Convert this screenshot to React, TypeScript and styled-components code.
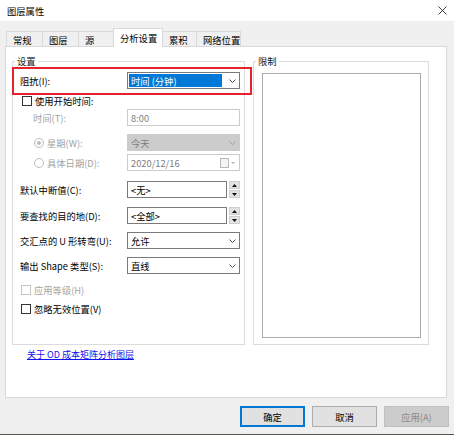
import React from "react";
import styled, { createGlobalStyle, css } from "styled-components";

const GlobalStyle = createGlobalStyle`
  html, body { margin: 0; padding: 0; background: #5a544b; }
  body {
    font-family: "Noto Sans CJK SC", "Noto Sans", sans-serif;
    font-size: 9.3px;
    color: #000;
  }
`;

const Window = styled.div`
  width: 454px;
  height: 434px;
  background: #f0f0f0;
  display: flex;
  flex-direction: column;
  overflow: hidden;
`;

const TitleBar = styled.div`
  height: 21px;
  flex-shrink: 0;
  background: #fff;
  display: flex;
  align-items: center;
  justify-content: space-between;
  padding: 0 7px;
  line-height: 12px;
`;

const Title = styled.span`
  color: #000;
`;

const TabStrip = styled.div`
  display: flex;
  align-items: flex-end;
  height: 18px;
  margin-top: 7px;
  padding-left: 6px;
  position: relative;
  z-index: 1;
`;

const Tab = styled.div<{ $w: number; $active?: boolean }>`
  box-sizing: border-box;
  width: ${(p) => p.$w}px;
  height: ${(p) => (p.$active ? 19 : 15)}px;
  margin-bottom: ${(p) => (p.$active ? -1 : 0)}px;
  margin-left: -1px;
  &:first-child { margin-left: 0; }
  border: 1px solid #d9d9d9;
  border-bottom: none;
  background: ${(p) => (p.$active ? "#fff" : "#f0f0f0")};
  padding-left: 6px;
  padding-top: ${(p) => (p.$active ? 0 : 1)}px;
  display: flex;
  align-items: center;
  line-height: 12px;
  white-space: nowrap;
  position: relative;
  z-index: ${(p) => (p.$active ? 2 : 1)};
`;

const Panel = styled.div`
  box-sizing: border-box;
  width: 442px;
  height: 352px;
  flex-shrink: 0;
  margin-left: 5px;
  background: #fff;
  border: 1px solid #d9d9d9;
  padding: 14px 17px 0 6px;
  display: flex;
  flex-direction: column;
`;

const Groups = styled.div`
  display: flex;
  gap: 8px;
  height: 284px;
`;

const GroupBox = styled.div<{ $w: number }>`
  box-sizing: border-box;
  width: ${(p) => p.$w}px;
  border: 1px solid #dcdcdc;
  display: flex;
  flex-direction: column;
`;

const Legend = styled.div`
  align-self: flex-start;
  margin: -7px 0 0 2px;
  padding: 0 2px;
  height: 12px;
  line-height: 12px;
  background: #fff;
  color: #1a1a1a;
`;

const Form = styled.div`
  padding: 0 4px 0 7px;
  display: flex;
  flex-direction: column;
`;

const Row = styled.div<{ $mt: number; $highlight?: boolean }>`
  display: grid;
  grid-template-columns: 107px 113px;
  align-items: center;
  height: 17px;
  margin-top: ${(p) => p.$mt}px;
  position: relative;
  ${(p) =>
    p.$highlight &&
    css`
      &::after {
        content: "";
        position: absolute;
        top: -5px;
        bottom: -6px;
        left: -8px;
        right: -12px;
        border: 2px solid #e8202a;
        pointer-events: none;
      }
    `}
`;

const Label = styled.span<{ $indent?: number; $disabled?: boolean }>`
  padding-left: ${(p) => p.$indent ?? 0}px;
  color: ${(p) => (p.$disabled ? "#a3a3a3" : "#000")};
  line-height: 12px;
  white-space: nowrap;
  display: flex;
  align-items: center;
  gap: 2px;
`;

const Field = styled.div<{ $disabled?: boolean; $fill?: boolean }>`
  box-sizing: border-box;
  height: 17px;
  border: 1px solid ${(p) => (p.$disabled ? "#cccccc" : "#7a7a7a")};
  background: ${(p) => (p.$fill ? "#cccccc" : "#fff")};
  color: ${(p) => (p.$disabled ? "#7d7d7d" : "#000")};
  display: flex;
  align-items: center;
  padding: 0 3px 0 3px;
  line-height: 12px;
  white-space: nowrap;
`;

const FieldText = styled.span`
  flex: 1;
`;

const Selected = styled.span`
  flex: 1;
  align-self: stretch;
  margin: 1px 7px 1px -2px;
  padding-left: 2px;
  background: #0078d7;
  color: #fff;
  display: flex;
  align-items: center;
`;

const SpinCell = styled.div`
  display: flex;
  gap: 2px;
  align-items: center;
`;

const SpinField = styled(Field)`
  width: 100px;
`;

const Spinner = styled.div`
  display: flex;
  flex-direction: column;
  gap: 1px;
  width: 11px;
`;

const SpinButton = styled.div`
  box-sizing: border-box;
  height: 8px;
  background: #e3e3e3;
  border: 1px solid #cfcfcf;
  display: flex;
  align-items: center;
  justify-content: center;
`;

const CheckRow = styled.div<{ $mt: number; $h?: number; $indent?: number; $disabled?: boolean }>`
  display: flex;
  align-items: center;
  gap: 3px;
  height: ${(p) => p.$h ?? 17}px;
  margin-top: ${(p) => p.$mt}px;
  padding-left: ${(p) => p.$indent ?? 2}px;
  color: ${(p) => (p.$disabled ? "#a3a3a3" : "#000")};
  line-height: 12px;
`;

const CheckBox = styled.span<{ $disabled?: boolean }>`
  box-sizing: border-box;
  width: 10px;
  height: 10px;
  border: 1px solid ${(p) => (p.$disabled ? "#c4c4c4" : "#333")};
  background: #fff;
`;

const Radio = styled.span<{ $checked?: boolean }>`
  box-sizing: border-box;
  width: 10px;
  height: 10px;
  border-radius: 50%;
  border: 1px solid #bcbcbc;
  background: #fff;
  display: inline-flex;
  align-items: center;
  justify-content: center;
  margin-right: 1px;
  &::after {
    content: "";
    width: 4px;
    height: 4px;
    border-radius: 50%;
    background: ${(p) => (p.$checked ? "#bcbcbc" : "transparent")};
  }
`;

const ListArea = styled.div`
  flex: 1;
  margin: 6px 7px 6px 8px;
  border: 1px solid #a9abb0;
  background: #fff;
`;

const Link = styled.a`
  margin: 4px 0 0 15px;
  color: #1010f0;
  font-size: 9px;
  text-decoration: underline;
  line-height: 12px;
  align-self: flex-start;
  cursor: pointer;
`;

const ButtonRow = styled.div`
  display: flex;
  justify-content: flex-end;
  gap: 7px;
  margin-top: 8px;
  padding-right: 5px;
`;

const Button = styled.button<{ $primary?: boolean }>`
  box-sizing: border-box;
  width: 65px;
  height: 21px;
  font: inherit;
  line-height: 12px;
  padding: 0;
  color: ${(p) => (p.disabled ? "#8a8a8a" : "#000")};
  background: ${(p) => (p.disabled ? "#cccccc" : "#e1e1e1")};
  border: 1px solid ${(p) => (p.$primary ? "#0078d7" : p.disabled ? "#bfbfbf" : "#adadad")};
  box-shadow: ${(p) => (p.$primary ? "inset 0 0 0 1px #0078d7" : "none")};
`;

const Chevron = ({ color = "#444" }: { color?: string }) => (
  <svg width="7" height="4" viewBox="0 0 7 4">
    <polyline points="0.5,0.5 3.5,3.5 6.5,0.5" fill="none" stroke={color} strokeWidth="0.9" />
  </svg>
);

const Tri = ({ up }: { up?: boolean }) => (
  <svg width="5" height="3" viewBox="0 0 5 3">
    <polygon points={up ? "2.5,0 5,3 0,3" : "0,0 5,0 2.5,3"} fill="#111" />
  </svg>
);

const CalendarIcon = () => (
  <svg width="16" height="10" viewBox="0 0 16 10">
    <rect x="0.5" y="0.5" width="8" height="9" fill="#f4f4f4" stroke="#b9b9b9" />
    <polygon points="11,4 15,4 13,6" fill="#b0b0b0" />
  </svg>
);

const CloseIcon = () => (
  <svg width="9" height="9" viewBox="0 0 9 9">
    <path d="M0.5 0.5 L8.5 8.5 M8.5 0.5 L0.5 8.5" stroke="#111" strokeWidth="0.8" />
  </svg>
);

const tabs: { label: string; w: number; active?: boolean }[] = [
  { label: "常规", w: 37 },
  { label: "图层", w: 37 },
  { label: "源", w: 36 },
  { label: "分析设置", w: 50, active: true },
  { label: "累积", w: 35 },
  { label: "网络位置", w: 45 },
];

export default function App() {
  return (
    <>
      <GlobalStyle />
      <Window>
        <TitleBar>
          <Title>图层属性</Title>
          <CloseIcon />
        </TitleBar>
        <TabStrip>
          {tabs.map((t) => (
            <Tab key={t.label} $w={t.w} $active={t.active}>
              {t.label}
            </Tab>
          ))}
        </TabStrip>
        <Panel>
          <Groups>
            <GroupBox $w={233}>
              <Legend>设置</Legend>
              <Form>
                <Row $mt={5} $highlight>
                  <Label>阻抗(I):</Label>
                  <Field>
                    <Selected>时间 (分钟)</Selected>
                    <Chevron />
                  </Field>
                </Row>
                <CheckRow $mt={4} $h={16}>
                  <CheckBox />
                  使用开始时间:
                </CheckRow>
                <Row $mt={0}>
                  <Label $indent={13} $disabled>时间(T):</Label>
                  <Field $disabled>
                    <FieldText>8:00</FieldText>
                  </Field>
                </Row>
                <Row $mt={8}>
                  <Label $indent={14} $disabled>
                    <Radio $checked />
                    星期(W):
                  </Label>
                  <Field $disabled $fill>
                    <FieldText>今天</FieldText>
                    <Chevron color="#9a9a9a" />
                  </Field>
                </Row>
                <Row $mt={3}>
                  <Label $indent={14} $disabled>
                    <Radio />
                    具体日期(D):
                  </Label>
                  <Field $disabled>
                    <FieldText>2020/12/16</FieldText>
                    <CalendarIcon />
                  </Field>
                </Row>
                <Row $mt={10}>
                  <Label>默认中断值(C):</Label>
                  <SpinCell>
                    <SpinField>
                      <FieldText>&lt;无&gt;</FieldText>
                    </SpinField>
                    <Spinner>
                      <SpinButton><Tri up /></SpinButton>
                      <SpinButton><Tri /></SpinButton>
                    </Spinner>
                  </SpinCell>
                </Row>
                <Row $mt={9}>
                  <Label>要查找的目的地(D):</Label>
                  <SpinCell>
                    <SpinField>
                      <FieldText>&lt;全部&gt;</FieldText>
                    </SpinField>
                    <Spinner>
                      <SpinButton><Tri up /></SpinButton>
                      <SpinButton><Tri /></SpinButton>
                    </Spinner>
                  </SpinCell>
                </Row>
                <Row $mt={8}>
                  <Label>交汇点的 U 形转弯(U):</Label>
                  <Field>
                    <FieldText>允许</FieldText>
                    <Chevron />
                  </Field>
                </Row>
                <Row $mt={8}>
                  <Label>输出 Shape 类型(S):</Label>
                  <Field>
                    <FieldText>直线</FieldText>
                    <Chevron />
                  </Field>
                </Row>
                <CheckRow $mt={7} $indent={1} $disabled>
                  <CheckBox $disabled />
                  应用等级(H)
                </CheckRow>
                <CheckRow $mt={2} $indent={1}>
                  <CheckBox />
                  忽略无效位置(V)
                </CheckRow>
              </Form>
            </GroupBox>
            <GroupBox $w={176}>
              <Legend>限制</Legend>
              <ListArea />
            </GroupBox>
          </Groups>
          <Link>关于 OD 成本矩阵分析图层</Link>
        </Panel>
        <ButtonRow>
          <Button $primary>确定</Button>
          <Button>取消</Button>
          <Button disabled>应用(A)</Button>
        </ButtonRow>
      </Window>
    </>
  );
}
